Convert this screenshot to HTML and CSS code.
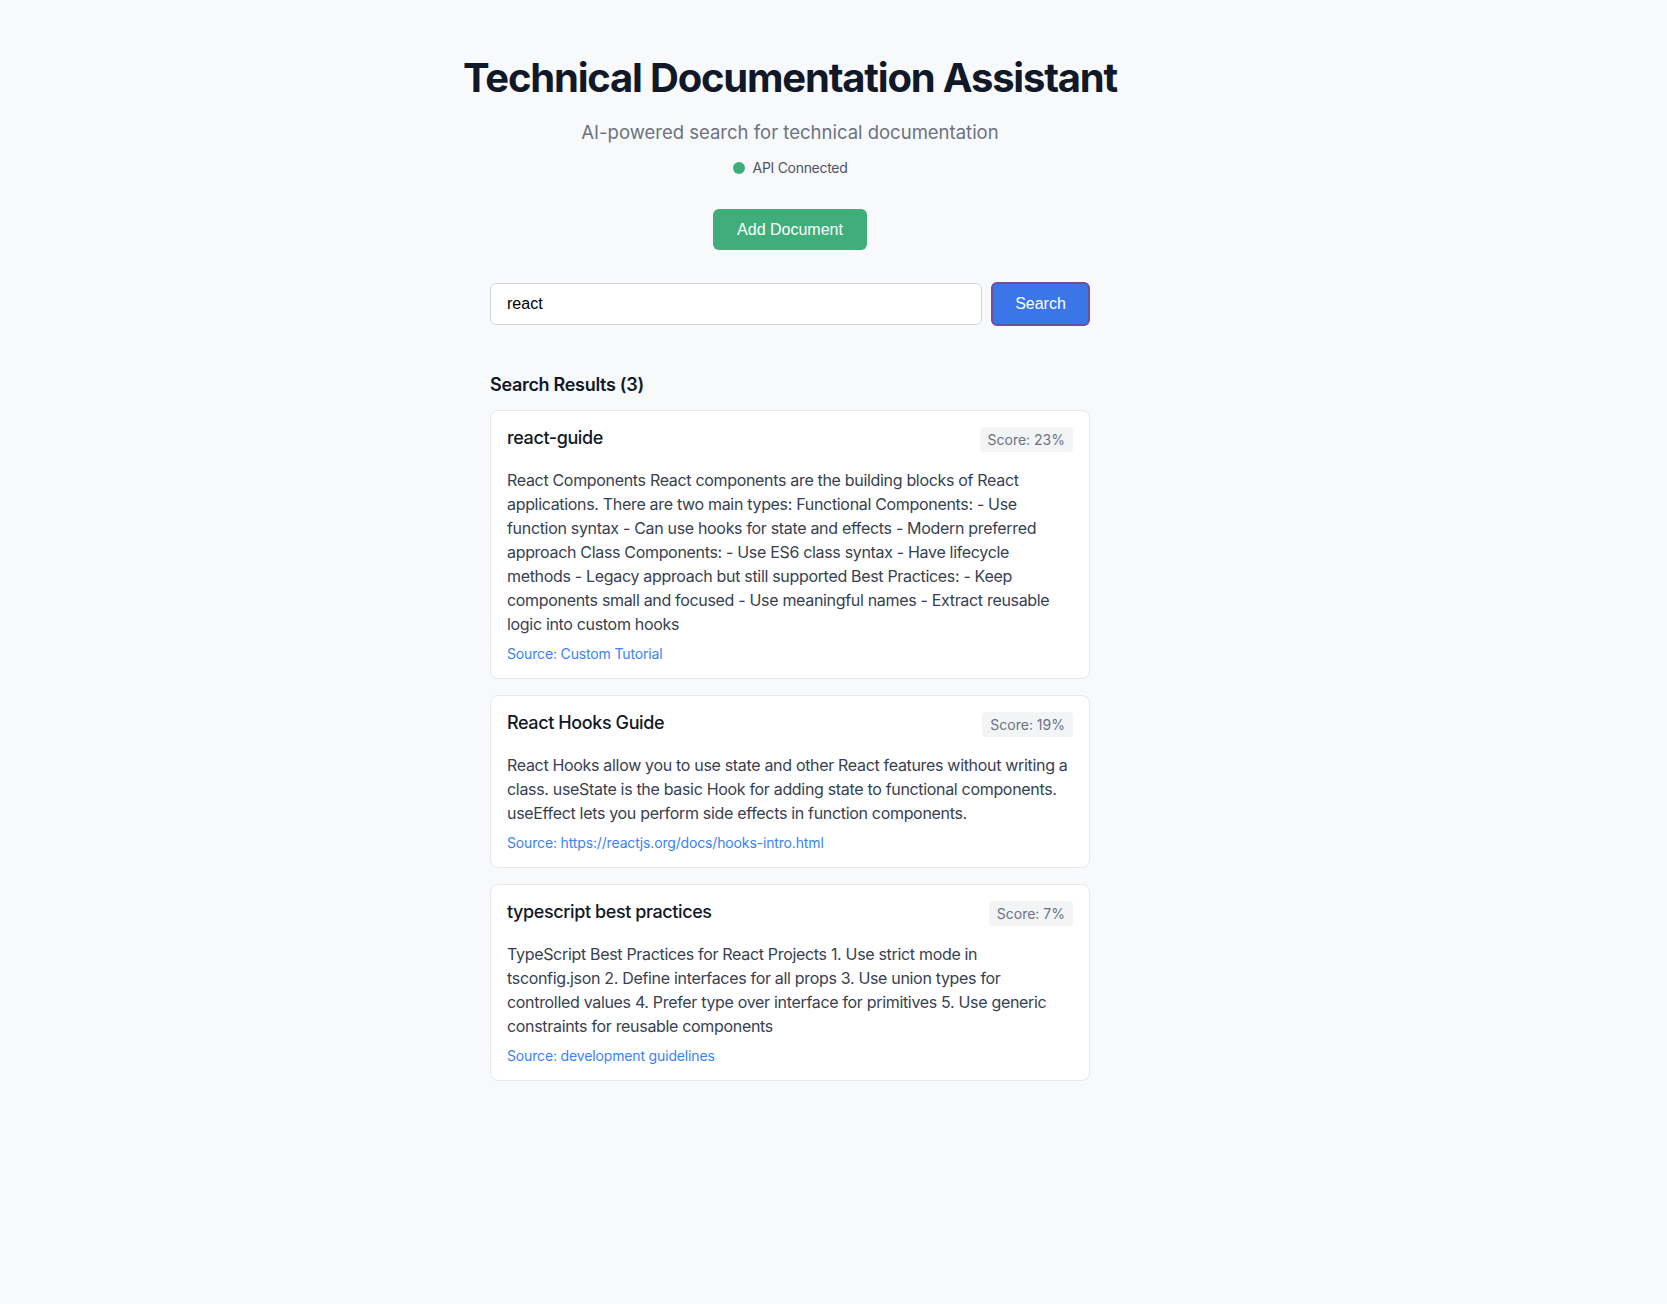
FILE: index.html
```html
<!DOCTYPE html>
<html lang="en">
<head>
<meta charset="utf-8">
<title>Technical Documentation Assistant</title>
<link rel="stylesheet" href="styles.css">
</head>
<body>
<div class="page">
  <header class="header">
    <h1 class="title">Technical Documentation Assistant</h1>
    <p class="subtitle">AI-powered search for technical documentation</p>
    <div class="status"><span class="dot"></span><span>API Connected</span></div>
    <button class="add-btn">Add Document</button>
  </header>
  <main class="container">
    <form class="search-row">
      <input class="search-input" type="text" value="react">
      <button class="search-btn" type="button">Search</button>
    </form>
    <h2 class="results-title">Search Results (3)</h2>
    <div class="results">
      <article class="card">
        <div class="card-head">
          <h3 class="card-title">react-guide</h3>
          <span class="score">Score: 23%</span>
        </div>
        <p class="card-body">React Components React components are the building blocks of React applications. There are two main types: Functional Components: - Use function syntax - Can use hooks for state and effects - Modern preferred approach Class Components: - Use ES6 class syntax - Have lifecycle methods - Legacy approach but still supported Best Practices: - Keep components small and focused - Use meaningful names - Extract reusable logic into custom hooks</p>
        <div class="source">Source: Custom Tutorial</div>
      </article>
      <article class="card">
        <div class="card-head">
          <h3 class="card-title">React Hooks Guide</h3>
          <span class="score">Score: 19%</span>
        </div>
        <p class="card-body">React Hooks allow you to use state and other React features without writing a class. useState is the basic Hook for adding state to functional components. useEffect lets you perform side effects in function components.</p>
        <div class="source">Source: https://reactjs.org/docs/hooks-intro.html</div>
      </article>
      <article class="card">
        <div class="card-head">
          <h3 class="card-title">typescript best practices</h3>
          <span class="score">Score: 7%</span>
        </div>
        <p class="card-body">TypeScript Best Practices for React Projects 1. Use strict mode in tsconfig.json 2. Define interfaces for all props 3. Use union types for controlled values 4. Prefer type over interface for primitives 5. Use generic constraints for reusable components</p>
        <div class="source">Source: development guidelines</div>
      </article>
    </div>
  </main>
</div>
</body>
</html>
```

FILE: styles.css
```css
* { box-sizing: border-box; }
html, body {
  margin: 0;
  padding: 0;
  background: #f8f9fb;
}
body {
  font-family: Inter, "Noto Sans", sans-serif;
  color: #111827;
  min-height: 1304px;
}
.page {
  width: 1580px;
  padding-top: 53px;
}
.header {
  display: flex;
  flex-direction: column;
  align-items: center;
}
.title {
  margin: 0;
  font-size: 40px;
  font-weight: 700;
  line-height: normal;
  color: #111827;
  letter-spacing: -1.2px;
}
.subtitle {
  margin: 19px 0 0;
  font-size: 18.5px;
  line-height: normal;
  color: #6b7280;
}
.status {
  margin-top: 16px;
  display: flex;
  align-items: center;
  gap: 8px;
  font-size: 14px;
  line-height: 17px;
  color: #4b5563;
  letter-spacing: -0.3px;
}
.dot {
  width: 12px;
  height: 12px;
  border-radius: 50%;
  background: #3dae79;
}
.add-btn {
  margin-top: 33px;
  height: 41px;
  padding: 0 24px;
  border: none;
  border-radius: 6px;
  background: #3fae7b;
  color: #fff;
  font-family: "Liberation Sans", Arial, sans-serif;
  font-size: 16px;
}
.container {
  width: 600px;
  margin: 0 auto;
}
.search-row {
  margin: 32px 0 0;
  display: flex;
  align-items: center;
  gap: 9px;
}
.search-input {
  flex: 1;
  height: 42px;
  padding: 0 16px;
  border: 1px solid #d1d5db;
  border-radius: 6px;
  background: #fff;
  font-family: "Liberation Sans", Arial, sans-serif;
  font-size: 16px;
  color: #000;
  outline: none;
}
.search-btn {
  width: 99px;
  height: 44px;
  border: 2px solid #6f4f9e;
  border-radius: 6px;
  background: #3b76e9;
  color: #fff;
  font-family: "Liberation Sans", Arial, sans-serif;
  font-size: 16px;
}
.results-title {
  margin: 48px 0 0;
  font-size: 18px;
  font-weight: 600;
  line-height: 22px;
  color: #111827;
  letter-spacing: -0.3px;
}
.results {
  margin-top: 14px;
  display: flex;
  flex-direction: column;
  gap: 16px;
}
.card {
  background: #fff;
  border: 1px solid #e5e7eb;
  border-radius: 8px;
  padding: 16px;
}
.card-head {
  display: flex;
  justify-content: space-between;
  align-items: flex-start;
}
.card-title {
  margin: 0;
  font-size: 18px;
  font-weight: 500;
  line-height: normal;
  color: #111827;
  letter-spacing: -0.4px;
}
.score {
  background: #f3f4f6;
  color: #6b7280;
  font-size: 14px;
  line-height: 17px;
  padding: 4px 8px;
  border-radius: 4px;
}
.card-body {
  margin: 16px 0 0;
  font-size: 16px;
  line-height: 24px;
  color: #374151;
  letter-spacing: -0.32px;
}
.source {
  margin-top: 9px;
  font-size: 14px;
  line-height: normal;
  color: #3b82f6;
  letter-spacing: -0.15px;
}
```
